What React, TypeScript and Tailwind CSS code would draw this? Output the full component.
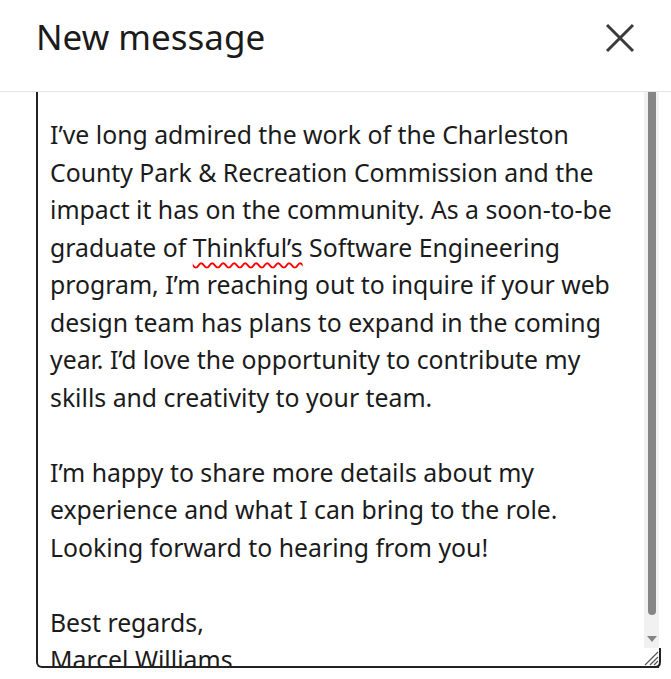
import React from 'react';

const lines: React.ReactNode[] = [
  'I’ve long admired the work of the Charleston',
  'County Park & Recreation Commission and the',
  'impact it has on the community. As a soon-to-be',
  <>
    graduate of{' '}
    <span className="underline decoration-wavy decoration-[#ff0000] decoration-[1.5px] underline-offset-[5px]">Thinkful’s</span>{' '}
    Software Engineering
  </>,
  'program, I’m reaching out to inquire if your web',
  'design team has plans to expand in the coming',
  'year. I’d love the opportunity to contribute my',
  'skills and creativity to your team.',
  '',
  'I’m happy to share more details about my',
  'experience and what I can bring to the role.',
  'Looking forward to hearing from you!',
  '',
  'Best regards,',
  'Marcel Williams',
];

const CloseIcon = () => (
  <svg width="32" height="32" viewBox="0 0 32 32" className="text-[#3b3b3b]">
    <path d="M3 3 L29 29 M29 3 L3 29" stroke="currentColor" strokeWidth="3" fill="none" />
  </svg>
);

const ResizeGrip = () => (
  <svg width="20" height="20" viewBox="0 0 20 20" className="absolute right-[-2px] bottom-[-2px]">
    {/* rounded corner of the box border */}
    <path d="M19 0 V14 Q19 19 14 19 H0" stroke="#222" strokeWidth="2" fill="none" />
    <path d="M17 4 L4 17 M17 9 L9 17 M17 13 L13 17" stroke="#555" strokeWidth="1.2" />
  </svg>
);

export default function App() {
  return (
    <div className="w-[671px] h-[679px] bg-white flex flex-col overflow-hidden font-['Noto_Sans',sans-serif] text-[#1b1b1b]">
      <header className="h-[92px] shrink-0 border-b border-[#e5e5e5] flex items-center justify-between pl-[36px] pr-[36px] pb-[14px]">
        <h1 className="text-[35px] leading-none pb-[4px]">New message</h1>
        <button className="mr-[-1px] pb-[2px]">
          <CloseIcon />
        </button>
      </header>

      <div className="flex-1 min-h-0 pl-[36px] pr-[12px] pb-[11px]">
        <div className="relative h-full border-l-2 border-b-2 border-[#222] rounded-bl-[6px] flex">
          {/* scrolled textarea content */}
          <div className="flex-1 min-w-0 overflow-hidden pl-[12px] pt-[24px] text-[24.8px] leading-[37.5px]">
            {lines.map((l, i) => (
              <div key={i} className="whitespace-nowrap h-[37.5px]">
                {l}
              </div>
            ))}
          </div>

          {/* scrollbar */}
          <div className="w-[15px] shrink-0 mb-[18px] bg-[#f1f1f1] flex flex-col items-center">
            <div className="w-[8px] h-[523px] bg-[#858585] rounded-b-full" />
            <div className="flex-1" />
            <div className="w-0 h-0 border-l-[5px] border-r-[5px] border-t-[6px] border-l-transparent border-r-transparent border-t-[#858585] mb-[6px]" />
          </div>

          <ResizeGrip />
        </div>
      </div>
    </div>
  );
}
